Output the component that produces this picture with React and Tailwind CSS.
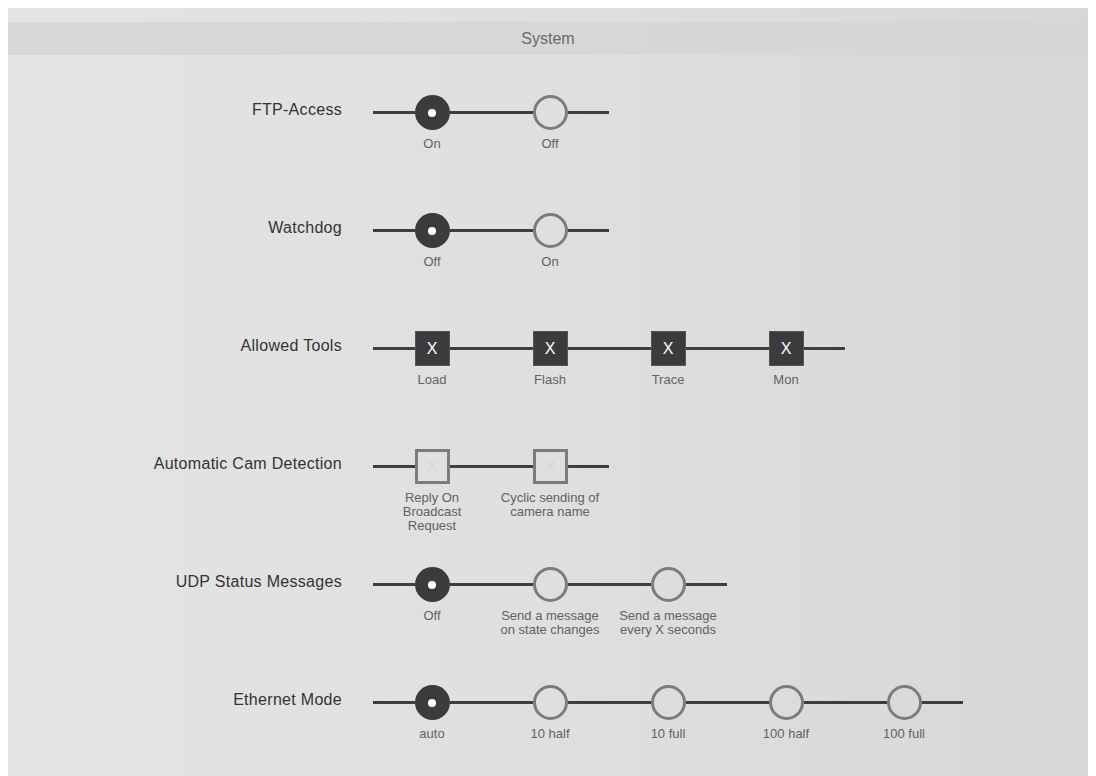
import React from 'react';

const rows = [
    { label: 'FTP-Access', kind: 'radio', selected: 0, options: ['On', 'Off'] },
    { label: 'Watchdog', kind: 'radio', selected: 0, options: ['Off', 'On'] },
    { label: 'Allowed Tools', kind: 'check', checked: [true, true, true, true], options: ['Load', 'Flash', 'Trace', 'Mon'] },
    { label: 'Automatic Cam Detection', kind: 'check', checked: [false, false], options: [['Reply On', 'Broadcast', 'Request'], ['Cyclic sending of', 'camera name']] },
    { label: 'UDP Status Messages', kind: 'radio', selected: 0, options: ['Off', ['Send a message', 'on state changes'], ['Send a message', 'every X seconds']] },
    { label: 'Ethernet Mode', kind: 'radio', selected: 0, options: ['auto', '10 half', '10 full', '100 half', '100 full'] },
];

function Node({ kind, active }) {
    if (kind === 'radio') {
        return active ? (
            <div className="w-[35px] h-[35px] rounded-full bg-[#3b3b3d] flex items-center justify-center shrink-0">
                <div className="w-[8px] h-[8px] rounded-full bg-white" />
            </div>
        ) : (
            <div className="w-[35px] h-[35px] rounded-full border-[3px] border-[#7c7c7c] shrink-0" />
        );
    }
    return active ? (
        <div className="w-[35px] h-[35px] bg-[#3b3b3d] border border-[#555] flex items-center justify-center text-white text-[16px] shrink-0">
            X
        </div>
    ) : (
        <div className="w-[35px] h-[35px] border-[3px] border-[#7c7c7c] flex items-center justify-center text-[#d4d4d4] text-[15px] shrink-0">
            X
        </div>
    );
}

function Option({ kind, active, text }) {
    const lines = Array.isArray(text) ? text : [text];
    return (
        <div className="w-[118px] flex flex-col items-center">
            <div className="w-full flex items-center">
                <div className="flex-1 h-[3px] bg-[#3e3e3e]" />
                <Node kind={kind} active={active} />
                <div className="flex-1 h-[3px] bg-[#3e3e3e]" />
            </div>
            <div className="mt-[7px] text-[13px] leading-[14px] text-[#626262] text-center whitespace-nowrap">
                {lines.map((l, i) => <div key={i}>{l}</div>)}
            </div>
        </div>
    );
}

export default function App() {
    return (
        <div className="min-h-screen bg-white pt-[8px] px-[8px]" style={{ fontFamily: '"Liberation Sans", Arial, sans-serif' }}>
            <div className="h-[768px] bg-gradient-to-r from-[#e4e4e4] via-[#dfdfdf] to-[#d7d7d7] pt-[14px]">
                {/* header */}
                <div className="h-[33px] bg-[#d4d4d4]/80 flex items-center justify-center text-[16px] text-[#6a6a6a]">
                    System
                </div>

                <div className="pt-[40px]">
                    {rows.map((row, r) => (
                        <div key={r} className="h-[118px] flex items-start">
                            <div className="w-[334px] h-[35px] flex items-center justify-end pb-[6px] text-[16px] tracking-[0.3px] text-[#333]">
                                {row.label}
                            </div>
                            <div className="ml-[31px] flex">
                                {row.options.map((opt, i) => (
                                    <Option
                                        key={i}
                                        kind={row.kind}
                                        text={opt}
                                        active={row.kind === 'radio' ? row.selected === i : row.checked[i]}
                                    />
                                ))}
                            </div>
                        </div>
                    ))}
                </div>
            </div>
        </div>
    );
}
